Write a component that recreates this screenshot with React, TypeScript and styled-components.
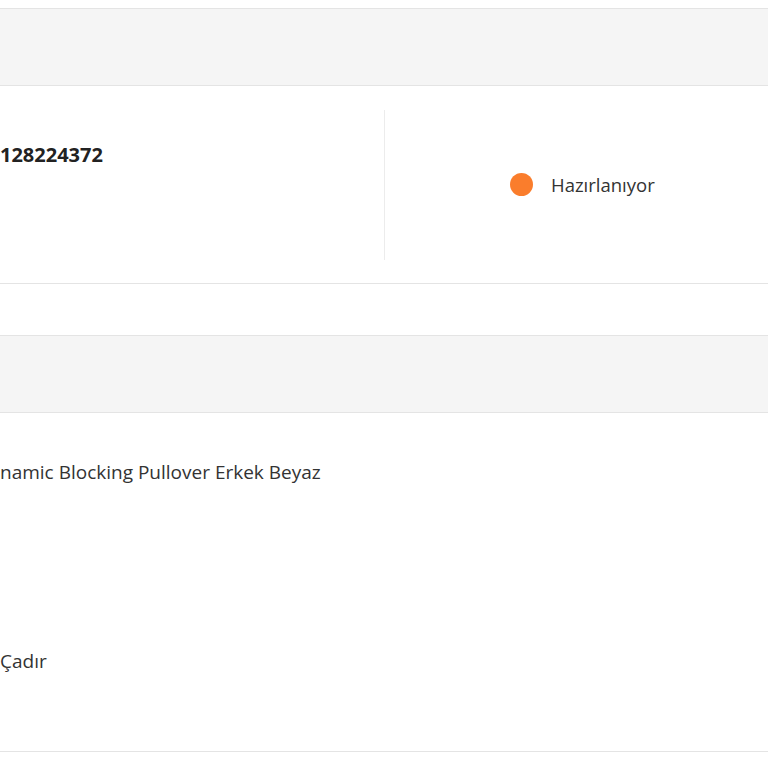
import { createGlobalStyle, styled } from "styled-components";

const GlobalStyle = createGlobalStyle`
  html, body {
    margin: 0;
    padding: 0;
    background: #ffffff;
    font-family: "Open Sans", "Liberation Sans", sans-serif;
    color: #333333;
    overflow: hidden;
  }
  * {
    box-sizing: border-box;
  }
`;

const App = () => {
  return (
    <Page>
      <GlobalStyle />
      <Card>
        <CardHeader />
        <OrderRow>
          <OrderInfo>
            <OrderNumber>128224372</OrderNumber>
          </OrderInfo>
          <StatusCell>
            <StatusDot />
            <StatusText>Hazırlanıyor</StatusText>
          </StatusCell>
        </OrderRow>
      </Card>
      <Card>
        <CardHeader />
        <ProductBody>
          <ProductName>namic Blocking Pullover Erkek Beyaz</ProductName>
          <SellerName>Çadır</SellerName>
        </ProductBody>
      </Card>
    </Page>
  );
};

export default App;

const Page = styled.div`
  width: 768px;
  height: 768px;
  padding-top: 8px;
  display: flex;
  flex-direction: column;
  gap: 51px;
`;

const Card = styled.section`
  border-top: 1px solid #e4e4e4;
  border-bottom: 1px solid #e4e4e4;
`;

const CardHeader = styled.div`
  height: 77px;
  background: #f5f5f5;
  border-bottom: 1px solid #e4e4e4;
`;

const OrderRow = styled.div`
  display: grid;
  grid-template-columns: 385px 1fr;
  height: 197px;
  align-items: center;
`;

const OrderInfo = styled.div`
  height: 150px;
  border-right: 1px solid #ececec;
  display: flex;
  flex-direction: column;
  padding-top: 32px;
`;

const OrderNumber = styled.div`
  font-size: 20px;
  font-weight: 700;
  color: #222222;
  line-height: 26px;
`;

const StatusCell = styled.div`
  display: flex;
  align-items: center;
  gap: 18px;
  padding-left: 125px;
`;

const StatusDot = styled.span`
  width: 23px;
  height: 23px;
  border-radius: 50%;
  background: #fa7d2c;
  flex-shrink: 0;
`;

const StatusText = styled.span`
  font-size: 18.5px;
  color: #333333;
  line-height: 26px;
`;

const ProductBody = styled.div`
  height: 338px;
  display: flex;
  flex-direction: column;
  padding-top: 46px;
`;

const ProductName = styled.div`
  font-size: 19px;
  line-height: 26px;
  color: #333333;
`;

const SellerName = styled.div`
  margin-top: 163px;
  font-size: 19px;
  line-height: 26px;
  color: #333333;
`;
